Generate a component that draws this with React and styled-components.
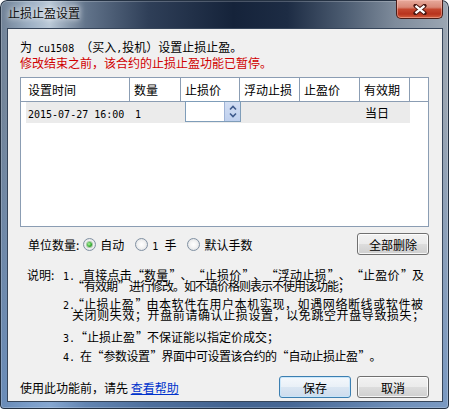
import React from 'react';
import styled, { createGlobalStyle, css } from 'styled-components';

const FONT = `"Noto Sans CJK SC", "Noto Sans", sans-serif`;
const MONO = `"DejaVu Sans Mono", "Liberation Mono", monospace`;
const GRID = '#8b9db3';

const Global = createGlobalStyle`
  html, body { margin: 0; padding: 0; background: #ffffff; }
  body { width: 449px; height: 409px; overflow: hidden; }
  * { box-sizing: border-box; }
`;

const Window = styled.div`
  width: 449px;
  height: 409px;
  display: flex;
  flex-direction: column;
  border-radius: 7px 7px 4px 4px;
  overflow: hidden;
  background:
    linear-gradient(180deg, rgba(0,0,0,0) 0%, rgba(0,0,0,0) 25%, rgba(100,145,205,0.6) 100%),
    linear-gradient(90deg, #6d7f94 0%, #9fb2c6 7%, #b9c8d7 11%, #62748b 19%, #2f3f58 33%, #15233a 52%, #1d2c44 64%, #4d5d72 77%, #7e8b9b 88%, #9ca7b4 100%);
  box-shadow: inset 0 0 0 1px #243142, inset 0 0 0 2px rgba(255,255,255,0.22);
  font-family: ${FONT};
  font-size: 12px;
  color: #000;
`;

const TitleBar = styled.div`
  height: 28px;
  flex: none;
  display: flex;
  align-items: flex-start;
  justify-content: space-between;
  padding: 0 6px 0 8px;
`;

const Title = styled.div`
  line-height: 26px;
  font-size: 12px;
  color: #111;
  text-shadow: 0 0 5px rgba(255,255,255,0.9), 0 0 9px rgba(255,255,255,0.7);
`;

const CloseButton = styled.div`
  width: 47px;
  height: 19px;
  display: flex;
  align-items: center;
  justify-content: center;
  border: 1px solid #4a1d17;
  border-top: none;
  border-radius: 0 0 5px 5px;
  background: linear-gradient(180deg, #e7aa9c 0%, #d98877 40%, #c4472f 52%, #b8331d 78%, #d4613f 100%);
  box-shadow: inset 0 0 0 1px rgba(255, 205, 195, 0.45);
`;

const Client = styled.div`
  flex: 1;
  margin: 0 6px 7px 7px;
  background: #f0f0f0;
  border: 1px solid #36455a;
  padding: 10px 13px 0 12px;
  display: flex;
  flex-direction: column;
`;

const InfoLine = styled.div`
  height: 16px;
  line-height: 16px;
  white-space: pre;
  color: ${(p) => (p.$warn ? '#d00000' : '#000')};
`;

const Half = styled.span`
  font-family: ${MONO};
  font-size: 10px;
  white-space: pre;
`;

const Quote = styled.span`
  display: inline-block;
  width: 12px;
  text-align: ${(p) => (p.$open ? 'right' : 'left')};
  padding: ${(p) => (p.$open ? '0 1px 0 0' : '0 0 0 1px')};
`;

const List = styled.div`
  margin-top: 6px;
  height: 150px;
  border: 1px solid ${GRID};
  background: #fff;
`;

const Cols = css`
  display: grid;
  grid-template-columns: 109px 51px 59px 60px 60px 50px 1fr;
`;

const HeaderRow = styled.div`
  ${Cols};
  height: 24px;
`;

const HeaderCell = styled.div`
  height: 24px;
  line-height: 23px;
  padding-left: ${(p) => (p.$first ? 7 : 4)}px;
  border-bottom: 1px solid ${GRID};
  border-right: ${(p) => (p.$filler ? 'none' : `1px solid ${GRID}`)};
  white-space: nowrap;
`;

const DataRow = styled.div`
  ${Cols};
  height: 21px;
`;

const DataCell = styled.div`
  height: 21px;
  line-height: 21px;
  background: ${(p) => (p.$filler ? '#fff' : '#ebebeb')};
  margin-left: ${(p) => (p.$first ? 5 : 0)}px;
  padding-left: ${(p) => (p.$first ? 2 : 5)}px;
  white-space: nowrap;
`;

const EditBox = styled.div`
  margin: -1px -1px 0 -1px;
  height: 21px;
  border: 1px solid #7f9db9;
  background: #fff;
  display: flex;
  justify-content: flex-end;
  position: relative;
  z-index: 1;
`;

const Spinner = styled.div`
  width: 16px;
  height: 100%;
  background: linear-gradient(180deg, #d2def3 0%, #bfd0ee 100%);
  border-left: 1px solid #9fb3d6;
  display: flex;
  align-items: center;
  justify-content: center;
`;

const UnitRow = styled.div`
  margin-top: 6px;
  height: 22px;
  display: flex;
  align-items: center;
  padding-left: 8px;
`;

const UnitLabel = styled.span`
  margin-right: 4px;
`;

const RadioOption = styled.label`
  display: flex;
  align-items: center;
  gap: 4px;
  margin-right: 11px;
  white-space: pre;
`;

const RadioCircle = styled.span`
  width: 13px;
  height: 13px;
  border-radius: 50%;
  border: 1px solid #8090a2;
  background: radial-gradient(circle at 50% 50%, #ffffff 0%, #f3f3f3 45%, #d4d8dc 100%);
  display: flex;
  align-items: center;
  justify-content: center;
  &::after {
    content: '';
    width: 5px;
    height: 5px;
    border-radius: 50%;
    display: ${(p) => (p.$checked ? 'block' : 'none')};
    background: radial-gradient(circle at 40% 40%, #b8f5a8 0%, #3fb43a 50%, #177a17 100%);
    box-shadow: 0 0 0 1px rgba(30, 120, 30, 0.35);
  }
`;

const Button = styled.div`
  width: 72px;
  height: 22px;
  display: flex;
  align-items: center;
  justify-content: center;
  border: 1px solid ${(p) => (p.$default ? '#3c7fb1' : '#707070')};
  border-radius: 3px;
  background: ${(p) =>
    p.$default
      ? 'linear-gradient(180deg, #f4f8fc 0%, #e9f0f7 49%, #dae6f2 50%, #cddced 100%)'
      : 'linear-gradient(180deg, #f2f2f2 0%, #ebebeb 49%, #dddddd 50%, #cfcfcf 100%)'};
  box-shadow: inset 0 0 0 1px ${(p) => (p.$default ? 'rgba(200,230,250,0.9)' : 'rgba(255,255,255,0.8)')};
  white-space: nowrap;
`;

const RightButton = styled(Button)`
  margin-left: auto;
`;

const Notes = styled.div`
  margin-top: 14px;
  display: flex;
  padding-left: 7px;
`;

const NotesLabel = styled.div`
  width: 36px;
  line-height: 11px;
  flex: none;
`;

const NotesList = styled.div`
  display: flex;
  flex-direction: column;
`;

const NoteItem = styled.div`
  display: flex;
  margin-top: ${(p) => p.$gap || 0}px;
  line-height: 11px;
`;

const NoteNum = styled.span`
  width: 17px;
  flex: none;
`;

const NoteText = styled.div`
  display: flex;
  flex-direction: column;
`;

const NoteLine = styled.span`
  white-space: pre;
  height: 11px;
  margin-left: ${(p) => p.$shift || 0}px;
  letter-spacing: ${(p) => p.$ls || 0}px;
`;

const Footer = styled.div`
  margin-top: 13px;
  height: 22px;
  display: flex;
  align-items: center;
  gap: 6px;
`;

const FooterText = styled.span`
  white-space: pre;
  margin-right: auto;
`;

const Link = styled.span`
  color: #0033cc;
  text-decoration: underline;
`;

const CloseGlyph = () => (
  <svg width="14" height="11" viewBox="0 0 14 11">
    <path d="M2.5 1.8 L11.5 9.2 M11.5 1.8 L2.5 9.2" stroke="#4a1610" strokeWidth="4.2" strokeLinecap="round" />
    <path d="M2.5 1.8 L11.5 9.2 M11.5 1.8 L2.5 9.2" stroke="#ffffff" strokeWidth="2.3" strokeLinecap="butt" />
  </svg>
);

const SpinGlyph = () => (
  <svg width="10" height="17" viewBox="0 0 10 17">
    <path d="M2 6.5 L5 3.5 L8 6.5" stroke="#3e5a8c" strokeWidth="1.6" fill="none" />
    <path d="M2 10.5 L5 13.5 L8 10.5" stroke="#3e5a8c" strokeWidth="1.6" fill="none" />
  </svg>
);

// Render curly quotes as full-width cells, as the original bitmap font does.
const withQuotes = (text) =>
  text.split(/([“”])/).map((part, i) => {
    if (part === '“') return <Quote key={i} $open>“</Quote>;
    if (part === '”') return <Quote key={i}>”</Quote>;
    return part;
  });

const headers = ['设置时间', '数量', '止损价', '浮动止损', '止盈价', '有效期'];

const notes = [
  {
    num: '1.',
    gap: 0,
    lines: [
      { t: '直接点击“数量”、“止损价”、“浮动止损”、“止盈价”及', shift: 3, ls: 0.25 },
      { t: '“有效期”进行修改。如不填价格则表示不使用该功能；', shift: -8, ls: -1 },
    ],
  },
  {
    num: '2.',
    gap: 7,
    lines: [
      { t: '“止损止盈”由本软件在用户本机实现，如遇网络断线或软件被', shift: -8, ls: 0.6 },
      { t: '关闭则失效；开盘前请确认止损设置，以免跳空开盘导致损失；', shift: -8, ls: 0.6 },
    ],
  },
  { num: '3.', gap: 11, lines: [{ t: '“止损止盈”不保证能以指定价成交；', shift: -5, ls: 0 }] },
  { num: '4.', gap: 6, lines: [{ t: '在“参数设置”界面中可设置该合约的“自动止损止盈”。', shift: 0, ls: -0.5 }] },
];

export default function App() {
  return (
    <>
      <Global />
      <Window>
        <TitleBar>
          <Title>止损止盈设置</Title>
          <CloseButton>
            <CloseGlyph />
          </CloseButton>
        </TitleBar>
        <Client>
          <InfoLine>
            为<Half> cu1508 </Half>（买入<Half>,</Half>投机）设置止损止盈。
          </InfoLine>
          <InfoLine $warn>修改结束之前，该合约的止损止盈功能已暂停。</InfoLine>
          <List>
            <HeaderRow>
              {headers.map((h, i) => (
                <HeaderCell key={h} $first={i === 0}>
                  {h}
                </HeaderCell>
              ))}
              <HeaderCell $filler />
            </HeaderRow>
            <DataRow>
              <DataCell $first>
                <Half>2015-07-27 16:00</Half>
              </DataCell>
              <DataCell>
                <Half>1</Half>
              </DataCell>
              <DataCell>
                <EditBox>
                  <Spinner>
                    <SpinGlyph />
                  </Spinner>
                </EditBox>
              </DataCell>
              <DataCell />
              <DataCell />
              <DataCell>当日</DataCell>
              <DataCell $filler />
            </DataRow>
          </List>
          <UnitRow>
            <UnitLabel>单位数量:</UnitLabel>
            <RadioOption>
              <RadioCircle $checked />
              自动
            </RadioOption>
            <RadioOption>
              <RadioCircle />
              <span>
                <Half>1 </Half>手
              </span>
            </RadioOption>
            <RadioOption>
              <RadioCircle />
              默认手数
            </RadioOption>
            <RightButton>全部删除</RightButton>
          </UnitRow>
          <Notes>
            <NotesLabel>说明:</NotesLabel>
            <NotesList>
              {notes.map((n) => (
                <NoteItem key={n.num} $gap={n.gap}>
                  <NoteNum>
                    <Half>{n.num}</Half>
                  </NoteNum>
                  <NoteText>
                    {n.lines.map((l, i) => (
                      <NoteLine key={i} $shift={l.shift} $ls={l.ls}>
                        {withQuotes(l.t)}
                      </NoteLine>
                    ))}
                  </NoteText>
                </NoteItem>
              ))}
            </NotesList>
          </Notes>
          <Footer>
            <FooterText>
              使用此功能前，请先 <Link>查看帮助</Link>
            </FooterText>
            <Button $default>保存</Button>
            <Button>取消</Button>
          </Footer>
        </Client>
      </Window>
    </>
  );
}
